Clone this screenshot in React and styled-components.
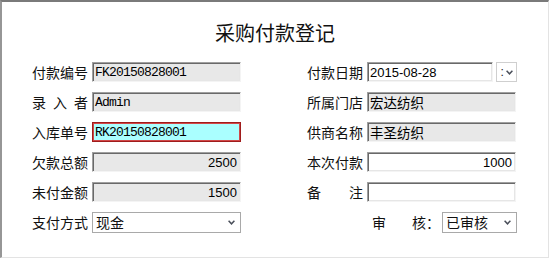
import React from 'react';
import styled, { createGlobalStyle, css } from 'styled-components';

const Global = createGlobalStyle`
  html, body { margin: 0; padding: 0; background: #fff; }
  body { font-family: "Noto Sans CJK SC", "Noto Sans", sans-serif; color: #000; }
`;

const Frame = styled.div`
  box-sizing: border-box;
  width: 549px;
  height: 258px;
  border-style: solid;
  border-width: 2px 1px 1px 2px;
  border-color: #7a7a7a #e3e3e3 #e3e3e3 #969696;
  background: #fff;
  padding-top: 19px;
`;

const Title = styled.h1`
  margin: 0;
  height: 24px;
  line-height: 24px;
  font-size: 20px;
  font-weight: normal;
  text-align: center;
  color: #111;
`;

const Form = styled.div`
  display: grid;
  grid-template-columns: 209px 210px;
  column-gap: 66px;
  row-gap: 10px;
  margin: 17px 0 0 30px;
`;

const Field = styled.div`
  display: flex;
  align-items: center;
  gap: ${(p) => (p.$gap != null ? p.$gap : 4)}px;
  height: 20px;
  justify-content: ${(p) => (p.$end ? 'flex-end' : 'flex-start')};
`;

const Label = styled.div`
  width: ${(p) => p.$w || 56}px;
  font-size: 14px;
  line-height: 20px;
  white-space: nowrap;
  color: #111;
  display: flex;
  justify-content: space-between;
`;

const tones = {
  gray: css`
    background: #e8e8e8;
  `,
  white: css`
    background: #fff;
  `,
};

const Box = styled.div`
  box-sizing: border-box;
  width: ${(p) => p.$w || 149}px;
  height: 20px;
  padding: 0 ${(p) => (p.$align === 'right' ? 3 : 2)}px 0 2px;
  display: flex;
  align-items: center;
  justify-content: ${(p) => (p.$align === 'right' ? 'flex-end' : 'flex-start')};
  border-style: solid;
  border-width: 1px;
  border-color: #a0a0a0 #f4f4f4 #f4f4f4 #a0a0a0;
  box-shadow: inset 1px 1px 0 #696969, inset -1px -1px 0 #e6e6e6;
  font-size: 13px;
  font-family: "Liberation Sans", Arial, sans-serif;
  white-space: nowrap;
  overflow: hidden;
  ${(p) => tones[p.$tone || 'gray']}
  ${(p) =>
    p.$mono &&
    css`
      font-family: "Liberation Mono", monospace;
      font-size: 13px;
      letter-spacing: -0.8px;
    `}
  ${(p) =>
    p.$cjk &&
    css`
      font-family: "Noto Sans CJK SC", sans-serif;
      font-size: 13.5px;
    `}
  ${(p) =>
    p.$focus &&
    css`
      width: 150px;
      background: #aaffff;
      border-color: #a01c1c;
      box-shadow: inset 0 0 0 1px #d04848;
    `}
`;

const Picker = styled.div`
  box-sizing: border-box;
  width: 21px;
  height: 20px;
  margin-left: -1px;
  border: 1px solid #cfcfcf;
  display: flex;
  align-items: center;
  justify-content: center;
  gap: 2px;
  font-family: "Liberation Sans", Arial, sans-serif;
  font-size: 12px;
  color: #222;
`;

const Select = styled.div`
  box-sizing: border-box;
  width: ${(p) => p.$w || 150}px;
  height: 21px;
  border: 1px solid #a9a9a9;
  background: #fff;
  display: flex;
  align-items: center;
  justify-content: space-between;
  padding: 0 5px 0 3px;
  font-size: 14px;
  line-height: 19px;
  color: #111;
`;

const Chevron = () => (
  <svg width="7" height="5" viewBox="0 0 7 5">
    <path d="M0.6 0.8 L3.5 3.8 L6.4 0.8" fill="none" stroke="#4a4f5a" strokeWidth="1.5" />
  </svg>
);

const Spaced = ({ text }) => text.split('').map((c, i) => <span key={i}>{c}</span>);

export default function App() {
  return (
    <>
      <Global />
      <Frame>
        <Title>采购付款登记</Title>
        <Form>
          <Field>
            <Label>付款编号</Label>
            <Box $mono>FK20150828001</Box>
          </Field>
          <Field>
            <Label>付款日期</Label>
            <Box $tone="white" $w={127}>2015-08-28</Box>
            <Picker>
              <span>:</span>
              <Chevron />
            </Picker>
          </Field>

          <Field>
            <Label>
              <Spaced text="录入者" />
            </Label>
            <Box $mono>Admin</Box>
          </Field>
          <Field>
            <Label>所属门店</Label>
            <Box $cjk>宏达纺织</Box>
          </Field>

          <Field>
            <Label>入库单号</Label>
            <Box $mono $focus>RK20150828001</Box>
          </Field>
          <Field>
            <Label>供商名称</Label>
            <Box $cjk>丰圣纺织</Box>
          </Field>

          <Field>
            <Label>欠款总额</Label>
            <Box $align="right">2500</Box>
          </Field>
          <Field>
            <Label>本次付款</Label>
            <Box $tone="white" $align="right">1000</Box>
          </Field>

          <Field>
            <Label>未付金额</Label>
            <Box $align="right">1500</Box>
          </Field>
          <Field>
            <Label>
              <Spaced text="备注" />
            </Label>
            <Box $tone="white" />
          </Field>

          <Field>
            <Label>支付方式</Label>
            <Select>
              <span>现金</span>
              <Chevron />
            </Select>
          </Field>
          <Field $end $gap={2}>
            <Label $w={68}>
              <span>审</span>
              <span>核：</span>
            </Label>
            <Select $w={75}>
              <span>已审核</span>
              <Chevron />
            </Select>
          </Field>
        </Form>
      </Frame>
    </>
  );
}
